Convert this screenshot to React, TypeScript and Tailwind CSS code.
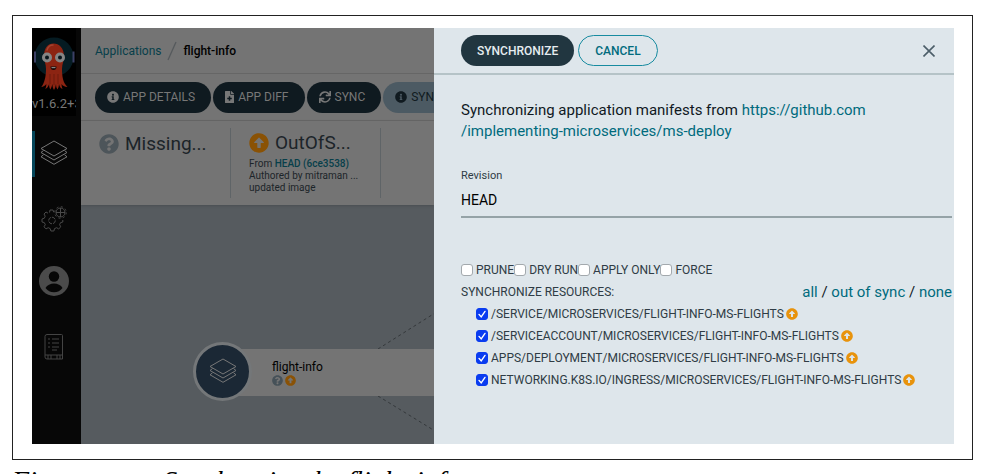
import { useState } from 'react';
import type { ReactNode } from 'react';
import { FaArrowAltCircleUp, FaInfoCircle, FaQuestionCircle, FaFileMedical, FaSync } from 'react-icons/fa';

const RESOURCES = [
  '/SERVICE/MICROSERVICES/FLIGHT-INFO-MS-FLIGHTS',
  '/SERVICEACCOUNT/MICROSERVICES/FLIGHT-INFO-MS-FLIGHTS',
  'APPS/DEPLOYMENT/MICROSERVICES/FLIGHT-INFO-MS-FLIGHTS',
  'NETWORKING.K8S.IO/INGRESS/MICROSERVICES/FLIGHT-INFO-MS-FLIGHTS',
];

const OPTIONS = ['PRUNE', 'DRY RUN', 'APPLY ONLY', 'FORCE'];

function Checkbox({ label, defaultChecked = false }: { label: string; defaultChecked?: boolean }) {
  return (
    <label className="flex shrink-0 items-center gap-[3px] whitespace-nowrap">
      <span className="grid place-items-center">
        <input
          type="checkbox"
          defaultChecked={defaultChecked}
          className="peer col-start-1 row-start-1 size-3 appearance-none rounded-[3px] border border-[#a3a9ad] bg-white checked:border-[#0a3cf0] checked:bg-[#0a3cf0]"
        />
        <svg viewBox="0 0 12 12" className="pointer-events-none invisible col-start-1 row-start-1 size-3 peer-checked:visible">
          <path d="M3 6.4 5.2 8.8 9 3.4" fill="none" stroke="white" strokeWidth="1.4" strokeLinecap="round" />
        </svg>
      </span>
      {label}
    </label>
  );
}

function Octopus() {
  return (
    <svg viewBox="0 0 48 56" className="h-14 w-12 shrink-0" aria-label="Argo">
      <circle cx="24" cy="21" r="19.500" fill="#051b22" />
      <path d="M5 15.500v11M43.500 15.500v11" stroke="#3c4066" strokeWidth="2" />
      <g transform="translate(1 0)">
        <path
          d="M13 20C13 12 17 7.500 22.500 7.500S33 12 33 20c0 5-2 8-2 13 0 7 1 14 5.500 18-3-.2-5-1.200-6-3 .1 2 .5 3.400 1 5-2-.8-3-2.500-3.500-5-.2 2.500-.6 4-1.500 5.500-1-1.500-1.400-3-1.500-5.500-.4 2.500-1 4.500-2 6-1-1.500-1.500-3.500-1.700-6-.3 2.200-1 4-2 5.500-.8-1.500-1.200-3-1.200-5.500-.8 2.500-2 4.200-3.800 5 .7-1.600 1-3 1-5-1.200 1.800-3 2.800-5 3 3-4 4.700-10 4.700-18 0-5-2-8-2-13z"
          fill="#8c2412"
        />
        <path d="M16 14c1-3 3-5 6-5" stroke="#a34330" strokeWidth="1.500" fill="none" strokeLinecap="round" />
        <path d="M19 38v10M23 38v11M27 38v10" stroke="#5e170c" strokeWidth=".7" />
        <circle cx="16" cy="21.500" r="5" fill="#858585" />
        <circle cx="29" cy="21.500" r="5" fill="#858585" />
        <circle cx="16" cy="21.500" r="2" fill="#08151b" />
        <circle cx="29" cy="21.500" r="2" fill="#08151b" />
        <path d="M19.500 30.500h6c0 2.500-1.200 3.500-3 3.500s-3-1-3-3.500z" fill="#160605" />
        <path d="M20.500 31h4v1.200h-4z" fill="#858585" />
      </g>
    </svg>
  );
}

function Layers({ className }: { className: string }) {
  return (
    <svg viewBox="0 0 28 28" className={className} fill="none" stroke="currentColor" strokeLinejoin="round">
      <path d="M14 1 27 8.500 14 16 1 8.500z" />
      <path d="M3.500 10.500 1 12.500 14 20l13-7.500-2.500-2" />
      <path d="M3.500 14.800 1 16.800 14 24.300l13-7.500-2.500-2" />
    </svg>
  );
}

function Gears() {
  return (
    <svg viewBox="0 0 28 28" className="size-7 text-[#4a4a4a]" fill="none" stroke="currentColor">
      <path d="M9.500 7.500 10 5h3l.7 2.300M8 8.200 6 7 4 9l1.200 2.200-.9 2L2 14v3l2.300.6 1 2.100L4 21.800l2 2.100 2.200-1.200 2 .9.700 2.400h3l.6-2.400 2.100-.9 2.100 1.200 2.100-2.100-1.200-2.100.9-2 2.300-.7v-2" />
      <circle cx="12" cy="15.500" r="3.300" strokeDasharray="4 1" />
      <circle cx="20.500" cy="7.500" r="4.500" />
      <circle cx="20.500" cy="7.500" r="5.800" strokeDasharray="2 2.500" />
      <path d="M16 7.500h9M20.500 3v9" />
    </svg>
  );
}

function User() {
  return (
    <svg viewBox="0 0 30 30" className="size-[30px]">
      <circle cx="15" cy="15" r="15" fill="#4b4b4b" />
      <circle cx="15" cy="10.500" r="5.200" fill="#070707" />
      <path d="M6.500 22c1.500-3 5-4.500 8.500-4.500s7 1.500 8.500 4.500c-2 2.800-5 4.300-8.500 4.300S8.500 24.800 6.500 22z" fill="#070707" />
    </svg>
  );
}

function Manual() {
  return (
    <svg viewBox="0 0 20 26" className="h-[26px] w-5 text-[#444]" fill="none" stroke="currentColor">
      <path d="M3 .5h14.500a1 1 0 0 1 1 1V25H3a2 2 0 0 1-2-2V2.500a2 2 0 0 1 2-2zM1 21h17.500" />
      <path d="M4 5h2M8 5h7M4 9h2M8 9h7M4 13h2M8 13h7M8 16h5M4 21v4M7 21v4M13 21v4M16 21v4" />
    </svg>
  );
}

function ToolButton({ icon, label, muted = false }: { icon: ReactNode; label: string; muted?: boolean }) {
  return (
    <button
      type="button"
      className={`flex h-[31px] shrink-0 items-center gap-1 rounded-full pr-4 pl-3 text-xs whitespace-nowrap ${
        muted ? 'bg-[#4c5a63] text-[#101a20]' : 'bg-[#0f1a20] text-[#777]'
      }`}
    >
      {icon}
      {label}
    </button>
  );
}

export default function App() {
  const [revision, setRevision] = useState('HEAD');

  return (
    <main className="h-screen overflow-hidden bg-white pt-[15px] pr-[11px] pl-3 font-['Roboto','Liberation_Sans',sans-serif]">
      <figure>
        <div className="border border-[#222] pt-3 pr-[18px] pb-[15px] pl-[19px]">
          <div className="flex h-[416px]">
            <nav className="flex w-[49px] shrink-0 flex-col items-center bg-[#070707] pr-[5px]">
              <div className="flex w-full flex-col items-center overflow-hidden bg-black pt-2">
                <Octopus />
                <span className="h-6 w-full overflow-hidden text-[13px] leading-6 whitespace-nowrap text-[#777]">v1.6.2+3</span>
              </div>
              <a href="#applications" aria-label="Applications" className="mt-[15px] flex h-[46px] w-full items-center justify-center border-l-[3px] border-[#05465a] pr-[3px] text-[#777]">
                <Layers className="size-7" />
              </a>
              <a href="#settings" aria-label="Settings" className="mt-7"><Gears /></a>
              <a href="#user" aria-label="User" className="mt-[33px]"><User /></a>
              <a href="#help" aria-label="Documentation" className="mt-[38px]"><Manual /></a>
            </nav>

            <section className="flex min-w-0 flex-1 flex-col overflow-hidden bg-[#565b5f]">
              <div className="flex h-[46px] shrink-0 items-center border-b border-[#666] bg-[#747474] pl-3.5 text-xs">
                <a href="#applications" className="text-[#073f4a]">Applications</a>
                <svg viewBox="0 0 10 20" className="mx-1.5 h-5 w-2.5"><path d="M1 19 9 1" stroke="#565a5d" strokeWidth="1.300" /></svg>
                <span className="font-medium text-black">flight-info</span>
              </div>
              <div className="flex h-[47px] shrink-0 items-center gap-0.5 border-b border-[#666] bg-[#747474] pl-3.5">
                <ToolButton icon={<FaInfoCircle className="size-3" />} label="APP DETAILS" />
                <ToolButton icon={<FaFileMedical className="h-3 w-[9px]" />} label="APP DIFF" />
                <ToolButton icon={<FaSync className="size-3" />} label="SYNC" />
                <ToolButton icon={<FaInfoCircle className="size-3" />} label="SYNC STATUS" muted />
              </div>
              <div className="flex h-[84px] shrink-0 bg-[#747474] py-[7px] pl-[18px] text-[#1c2429] shadow-sm">
                <div className="w-[132px] shrink-0 border-r border-[#5f6467]">
                  <div className="flex h-8 items-center gap-1.5 text-[19px]">
                    <FaQuestionCircle className="size-5 text-[#4d555a]" />
                    Missing...
                  </div>
                </div>
                <div className="w-[150px] shrink-0 border-r border-[#5f6467] pl-[18px]">
                  <div className="flex h-[30px] items-center gap-1.5 text-[19px]">
                    <FaArrowAltCircleUp className="size-5 text-[#8a5205]" />
                    OutOfS...
                  </div>
                  <p className="text-[10px] leading-3">
                    From <a href="#head" className="font-medium text-[#073f4a]">HEAD (6ce3538)</a>
                    <br />
                    Authored by mitraman ...
                    <br />
                    updated image
                  </p>
                </div>
              </div>
              <div className="relative min-h-0 flex-1">
                <svg className="absolute inset-0 size-full" fill="none" stroke="#34383b" strokeDasharray="3 3">
                  <path d="M297 144 354 108M297 191l57 35" />
                </svg>
                <div className="absolute top-[144px] right-0 left-[140px] flex h-[47px] items-center bg-[#747474] pl-[51px]">
                  <div className="text-xs leading-4 text-black">
                    flight-info
                    <span className="flex gap-0.5">
                      <FaQuestionCircle className="size-[11px] text-[#465158]" />
                      <FaArrowAltCircleUp className="size-[11px] text-[#8a5205]" />
                    </span>
                  </div>
                </div>
                <div className="absolute top-[137px] left-[112px] flex size-[59px] items-center justify-center rounded-full border-[3px] border-[#747779] bg-[#1b2835] text-[#777]">
                  <Layers className="size-7" />
                </div>
              </div>
            </section>

            <form className="w-[520px] shrink-0 bg-[#dee6eb] text-[#2f3c45]" onSubmit={(e) => e.preventDefault()}>
              <header className="flex h-[47px] items-center gap-1 border-b-2 border-[#b5c3c7] pr-[19px] pl-[27px] text-xs font-medium">
                <button type="submit" className="h-[31px] rounded-full bg-[#213640] px-4 text-[#e6edf0]">SYNCHRONIZE</button>
                <button type="button" className="h-[31px] rounded-full border border-[#178ba0] px-4 text-[#006b7d]">CANCEL</button>
                <button type="button" aria-label="Close" className="ml-auto">
                  <svg viewBox="0 0 12 12" className="size-3"><path d="m.5.5 11 11m0-11-11 11" stroke="#4c5e69" strokeWidth="1.600" /></svg>
                </button>
              </header>
              <div className="pr-0.5 pl-[27px]">
                <p className="pt-[25px] text-[15px] leading-[21px] text-[#10191f]">
                  Synchronizing application manifests from{' '}
                  <a href="#repository" className="text-[#006b7d]">
                    https://github.com
                    <br />
                    /implementing-microservices/ms-deploy
                  </a>
                </p>
                <label className="mt-[26px] block text-[11px] leading-4">
                  Revision
                  <input
                    value={revision}
                    onChange={(e) => setRevision(e.target.value)}
                    className="block h-[34px] w-full border-b-2 border-[#95a3a7] bg-transparent text-sm text-black outline-none"
                  />
                </label>
                <div className="mt-[41px] flex h-[22px] items-center text-xs">
                  {OPTIONS.map((option) => (
                    <Checkbox key={option} label={option} />
                  ))}
                </div>
                <div className="flex h-[22px] items-center justify-between">
                  <span className="text-xs">SYNCHRONIZE RESOURCES:</span>
                  <span className="text-[15px] text-[#10191f]">
                    <a href="#all" className="text-[#006b7d]">all</a> / <a href="#out-of-sync" className="text-[#006b7d]">out of sync</a> /{' '}
                    <a href="#none" className="text-[#006b7d]">none</a>
                  </span>
                </div>
                <ul className="pl-[15px] text-xs">
                  {RESOURCES.map((resource) => (
                    <li key={resource} className="flex h-[22px] items-center gap-0.5">
                      <Checkbox label={resource} defaultChecked />
                      <FaArrowAltCircleUp className="size-3 text-[#e8930c]" />
                    </li>
                  ))}
                </ul>
              </div>
            </form>
          </div>
        </div>
        <figcaption className="flex gap-19 pt-[5px] font-['Liberation_Serif',serif] text-[28px] leading-8 whitespace-nowrap text-black italic">
          <span>Figure</span>
          <span>Synchronize the flight-info</span>
        </figcaption>
      </figure>
    </main>
  );
}
